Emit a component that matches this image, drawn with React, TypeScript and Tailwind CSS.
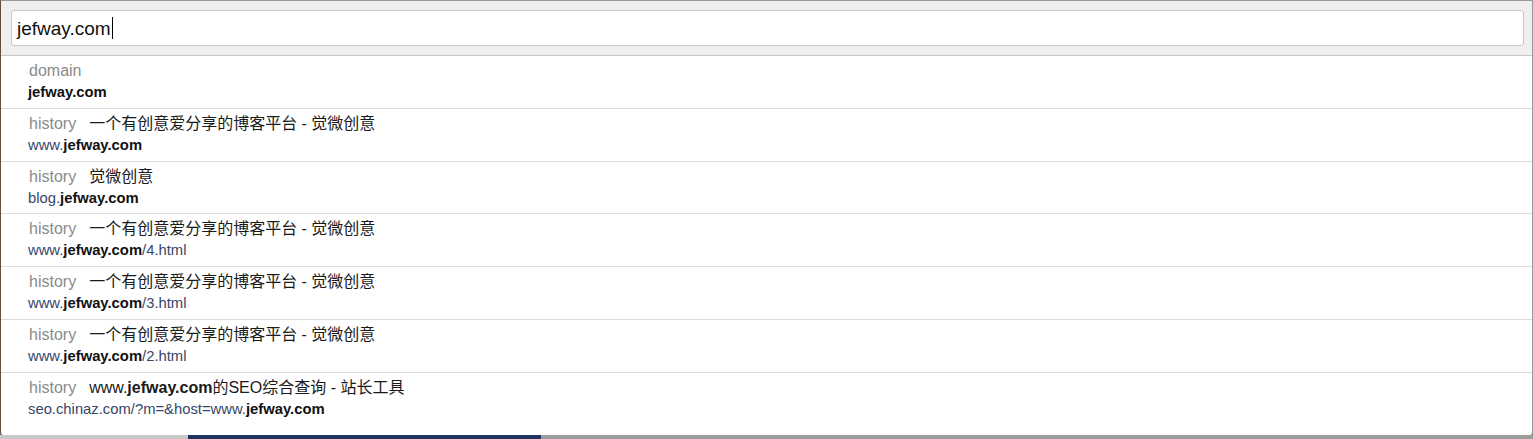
const rows = [
  { label: 'domain', title: null, pre: '', host: 'jefway.com', post: '', h: 'h-[53px]' },
  { label: 'history', title: '一个有创意爱分享的博客平台 - 觉微创意', pre: 'www.', host: 'jefway.com', post: '', h: 'h-[53px]' },
  { label: 'history', title: '觉微创意', pre: 'blog.', host: 'jefway.com', post: '', h: 'h-[52px]' },
  { label: 'history', title: '一个有创意爱分享的博客平台 - 觉微创意', pre: 'www.', host: 'jefway.com', post: '/4.html', h: 'h-[53px]' },
  { label: 'history', title: '一个有创意爱分享的博客平台 - 觉微创意', pre: 'www.', host: 'jefway.com', post: '/3.html', h: 'h-[53px]' },
  { label: 'history', title: '一个有创意爱分享的博客平台 - 觉微创意', pre: 'www.', host: 'jefway.com', post: '/2.html', h: 'h-[53px]' },
];

const font = { fontFamily: '"Liberation Sans", Arial, "Noto Sans CJK SC", sans-serif' };

export default function App() {
  return (
    <div className="w-[1533px] h-[439px] flex flex-col bg-[#a0a0a0] overflow-hidden" style={font}>
      <div className="h-[435px] flex flex-col bg-white border-x border-t border-[#9a9a9a] border-l-[#6b4a3a] rounded-b-[3px] shadow-[0_1px_2px_rgba(0,0,0,0.5)]">
        <div className="bg-[#efefef] border-b border-[#c6c6c6] pt-[9px] pb-[9px] pl-[10px] pr-[8px]">
          <div className="h-[36px] bg-white border border-[#c8c8c8] rounded-[3px] flex items-center pl-[5px]">
            <span className="text-[19px] text-[#111] leading-none">jefway.com</span>
            <span className="w-px h-[22px] bg-black ml-[1px]" />
          </div>
        </div>
        {rows.map((r, i) => (
          <div key={i} className={`${r.h} border-b border-[#dcdcdc] pt-[4px] pl-[27px]`}>
            <div className="flex items-center h-[22px]">
              <span className="text-[16px] text-[#8a8a8a] pl-px">{r.label}</span>
              {r.title && <span className="text-[16px] text-[#1a1a1a] ml-[13px]">{r.title}</span>}
            </div>
            <div className="h-[21px] flex items-center text-[14.8px] text-[#36466a]">
              {r.pre}
              <b className="text-[#111]">{r.host}</b>
              {r.post}
            </div>
          </div>
        ))}
        <div className="flex-1 pt-[4px] pl-[27px]">
          <div className="flex items-center h-[22px]">
            <span className="text-[16px] text-[#8a8a8a] pl-px">history</span>
            <span className="text-[16px] text-[#1a1a1a] ml-[13px]">
              www.<b>jefway.com</b>的SEO综合查询 - 站长工具
            </span>
          </div>
          <div className="h-[21px] flex items-center text-[14.8px] text-[#36466a]">
            seo.chinaz.com/?m=&amp;host=www.
            <b className="text-[#111]">jefway.com</b>
          </div>
        </div>
      </div>
      <div className="flex-1 flex">
        <div className="w-[188px] bg-[#c8c8c8]" />
        <div className="w-[353px] bg-[#1c355e]" />
        <div className="flex-1 bg-[#9c9c9c]" />
      </div>
    </div>
  );
}
